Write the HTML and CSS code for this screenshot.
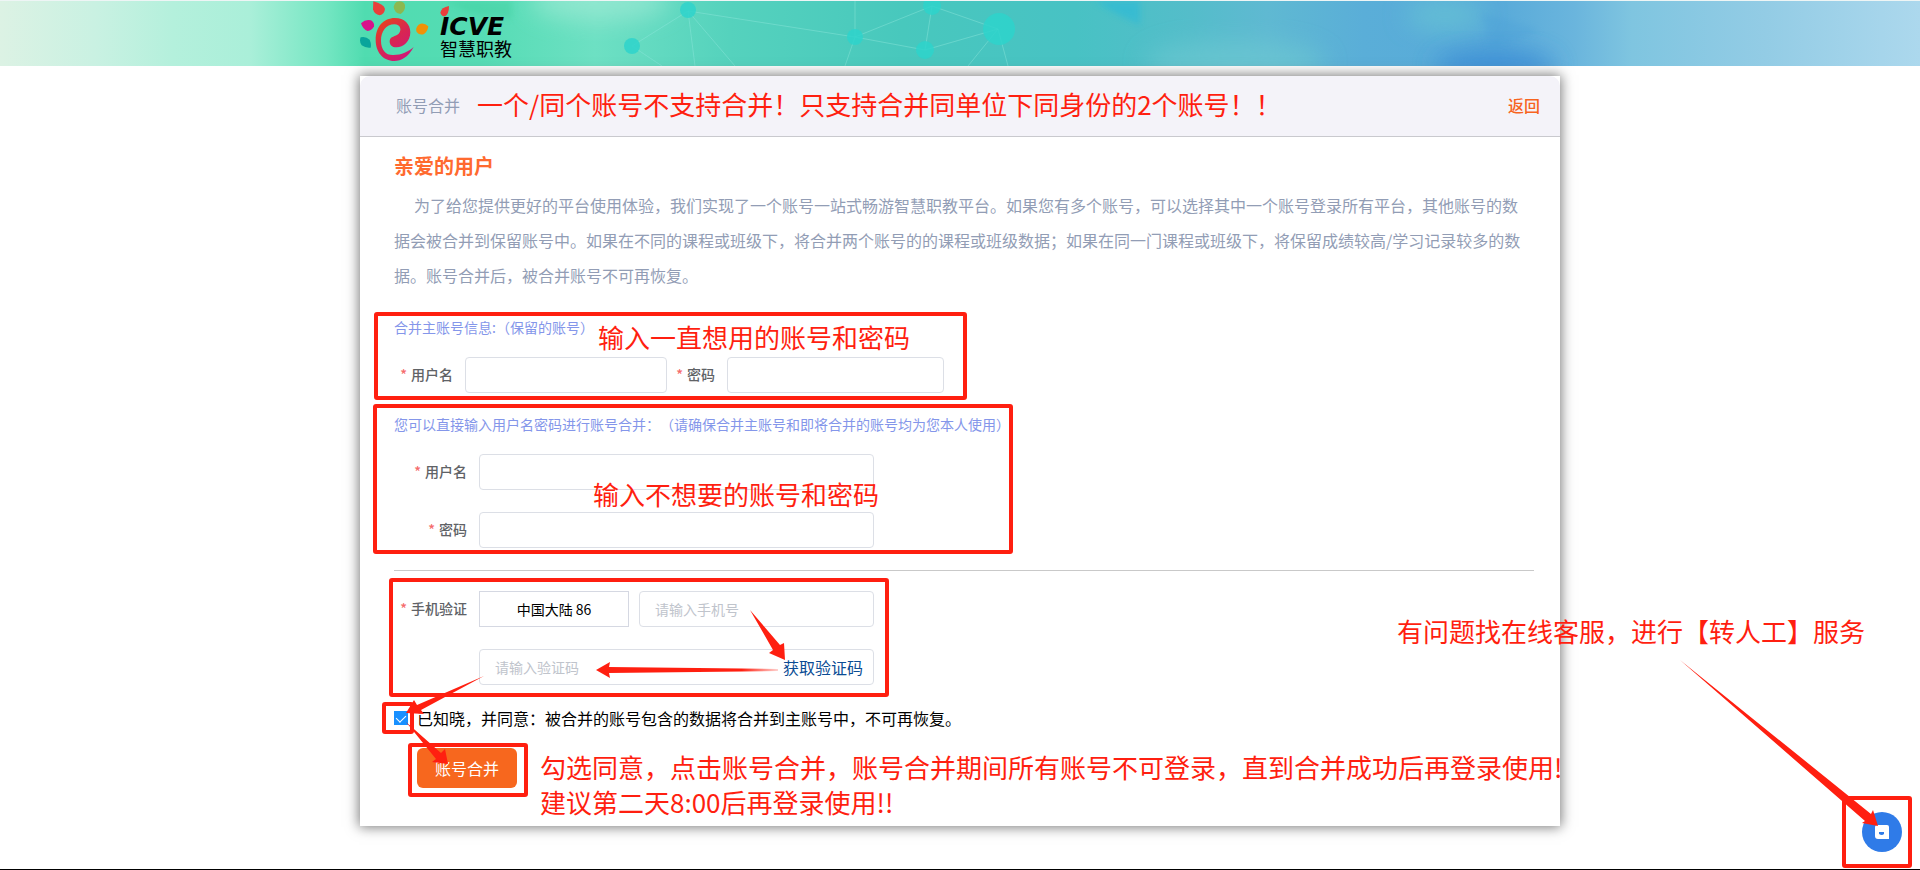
FILE: index.html
```
<!DOCTYPE html>
<html lang="zh-CN">
<head>
<meta charset="utf-8">
<meta name="viewport" content="width=device-width, initial-scale=1">
<title>账号合并</title>
<link rel="stylesheet" href="styles.css">
</head>
<body>
<div class="page">
  <header class="banner">
    <svg class="banner-art" viewBox="0 0 1920 65" preserveAspectRatio="xMidYMid slice" aria-hidden="true">
      <defs>
        <filter id="soft" x="-50%" y="-50%" width="200%" height="200%"><feGaussianBlur stdDeviation="12"/></filter>
        <filter id="haze" x="-50%" y="-50%" width="200%" height="200%"><feGaussianBlur stdDeviation="3"/></filter>
      </defs>
      <ellipse cx="600" cy="0" rx="70" ry="20" fill="#a8ecd8" opacity=".6" filter="url(#soft)"/>
      <path d="M445 0H512V18L470 12Z" fill="#3ccf9c" opacity=".4" filter="url(#haze)"/>
      <path d="M1095 0H1140V24L1115 12Z" fill="#24b8dc" opacity=".5" filter="url(#haze)"/>
      <ellipse cx="1235" cy="62" rx="90" ry="22" fill="#70cad2" opacity=".6" filter="url(#soft)"/>
      <ellipse cx="1445" cy="14" rx="40" ry="16" fill="#68c4d4" opacity=".7" filter="url(#soft)"/>
      <ellipse cx="1495" cy="66" rx="60" ry="18" fill="#3a8cd6" opacity=".8" filter="url(#soft)"/>
      <path d="M1482 12 1540 29 1490 50Z" fill="#4a9fd8" opacity=".3" filter="url(#haze)"/>
      <g stroke="#8ee6dc" stroke-opacity=".45" fill="none">
        <path d="M632 45 688 10 855 36 932 5 998 28 925 49 855 36M632 45 662 65M688 10 695 65M688 10 735 65M855 36 845 65M932 5 925 49M998 28 968 65M998 28 1008 65M855 0V36"/>
      </g>
      <g fill="#2ed3cb" fill-opacity=".85"><circle cx="688" cy="9" r="8"/><circle cx="632" cy="45" r="8"/><circle cx="855" cy="36" r="8"/><circle cx="932" cy="5" r="9"/><circle cx="925" cy="49" r="9"/><circle cx="999" cy="28" r="16"/></g>
    </svg>
    <div class="brand">
      <svg class="brand-mark" viewBox="60 0 270 195" aria-hidden="true">
        <defs><linearGradient id="swirl" x1="0" y1="0" x2=".7" y2="1"><stop offset="0" stop-color="#ea4a12"/><stop offset=".55" stop-color="#d82552"/><stop offset="1" stop-color="#cf1878"/></linearGradient></defs>
        <path fill="url(#swirl)" d="M221 141C205 172 183 183 163 183C128 183 107 155 107 120C107 80 130 54 165 54C193 54 211 72 211 97C211 125 190 142 170 142C155 142 148 133 149 122C151 108 166 110 176 101C186 91 182 73 163 73C138 73 123 95 123 122C123 150 138 166 160 165C185 165 205 155 221 141Z"/>
        <path fill="#e93f3b" d="M100 4Q130 12 135 26Q134 42 119 46Q103 43 99 28Z"/>
        <path fill="#8cb850" d="M170 5Q190 1 195 15Q197 32 182 42Q162 38 161 20Q163 9 170 5Z"/>
        <path fill="#d9118b" d="M63 70Q77 56 93 61Q104 68 102 79Q96 92 83 93Q69 89 63 70Z"/>
        <path fill="#f09207" d="M265 79Q250 65 236 74Q225 84 230 96Q239 107 252 102Q263 94 265 79Z"/>
        <path fill="#09a59b" d="M62 112Q77 108 89 119Q95 133 92 143Q77 145 65 136Q57 124 62 112Z"/>
        <path fill="#e93f3b" d="M327 18Q304 22 301 38Q304 49 315 49Q327 42 327 18Z"/>
      </svg>
      <div class="brand-text"><span class="brand-en">ICVE</span><span class="brand-cn">智慧职教</span></div>
    </div>
  </header>

  <main class="card">
    <div class="card-head">
      <h1 class="card-title">账号合并</h1>
      <a class="back" href="#">返回</a>
    </div>
    <form class="card-body">
      <h2 class="greeting">亲爱的用户</h2>
      <p class="intro">为了给您提供更好的平台使用体验，我们实现了一个账号一站式畅游智慧职教平台。如果您有多个账号，可以选择其中一个账号登录所有平台，其他账号的数据会被合并到保留账号中。如果在不同的课程或班级下，将合并两个账号的的课程或班级数据；如果在同一门课程或班级下，将保留成绩较高/学习记录较多的数据。账号合并后，被合并账号不可再恢复。</p>

      <p class="hint hint-main">合并主账号信息:（保留的账号）</p>
      <div class="inline-row">
        <label class="label label-name" for="main-user">用户名</label>
        <input class="input input-name" id="main-user" type="text">
        <label class="label label-pass" for="main-pass">密码</label>
        <input class="input input-pass" id="main-pass" type="password">
      </div>

      <p class="hint hint-merge">您可以直接输入用户名密码进行账号合并：（请确保合并主账号和即将合并的账号均为您本人使用）</p>
      <div class="fields">
        <label class="label" for="merge-user">用户名</label>
        <input class="input" id="merge-user" type="text">
        <label class="label" for="merge-pass">密码</label>
        <input class="input" id="merge-pass" type="password">
      </div>

      <hr class="divider">

      <div class="fields">
        <label class="label" for="phone">手机验证</label>
        <div class="phone-row">
          <select class="region" aria-label="国家或地区"><option>中国大陆 86</option></select>
          <input class="input" id="phone" type="tel" placeholder="请输入手机号">
        </div>
        <div class="code-row">
          <input class="code-input" type="text" placeholder="请输入验证码" aria-label="验证码">
          <button class="code-button" type="button">获取验证码</button>
        </div>
      </div>

      <div class="agree">
        <input class="check" id="agree" type="checkbox" checked>
        <label for="agree">已知晓，并同意：被合并的账号包含的数据将合并到主账号中，不可再恢复。</label>
      </div>
      <button class="submit" type="button">账号合并</button>
    </form>

    <div class="notes">
      <p class="note note-title">一个/同个账号不支持合并！只支持合并同单位下同身份的2个账号！！</p>
      <p class="note note-keep">输入一直想用的账号和密码</p>
      <p class="note note-drop">输入不想要的账号和密码</p>
      <p class="note note-submit">勾选同意，点击账号合并，账号合并期间所有账号不可登录，直到合并成功后再登录使用!!<br>建议第二天8:00后再登录使用!!</p>
      <span class="frame frame-keep"></span>
      <span class="frame frame-drop"></span>
      <span class="frame frame-phone"></span>
      <span class="frame frame-check"></span>
      <span class="frame frame-submit"></span>
      <svg class="arrows" width="1200" height="750" viewBox="0 0 1200 750" aria-hidden="true">
        <defs><linearGradient id="fade" x1="1" x2="0"><stop offset="0" stop-color="#ff1f10" stop-opacity=".2"/><stop offset=".2" stop-color="#ff1f10"/></linearGradient></defs>
        <path d="M390 534 420 569 424 567 425 584 409 577 413 574Z"/>
        <path fill="url(#fade)" d="M418 593V595L249 597 250 602 236 594 250 586 249 591Z"/>
        <path d="M124 600 57 629 54 624 46 637 64 638 61 634Z"/>
        <path d="M46 646 81 677 85 673 88 688 72 686 76 683Z"/>
      </svg>
    </div>
  </main>

  <aside class="support">
    <p class="note note-support">有问题找在线客服，进行【转人工】服务</p>
    <button class="chat" type="button" aria-label="在线客服">
      <svg viewBox="0 0 40 40" aria-hidden="true"><path fill="#fff" d="M15 13H25Q27 13 27 15V27H16Q13 27 13 24V15Q13 13 15 13Z"/><path fill="#2f7be8" d="M17 20H22V22Q20 24 17 22Z"/></svg>
    </button>
    <span class="frame frame-chat"></span>
    <svg class="support-arrow" width="240" height="190" viewBox="0 0 240 190" aria-hidden="true"><path d="M10 10 201 164 203 160 208 176 192 173 195 171Z"/></svg>
  </aside>
</div>
</body>
</html>
```
FILE: styles.css
```
* { box-sizing: border-box; }

body {
  margin: 0;
  background: #fff;
  color: #000;
  font-family: "Noto Sans CJK SC", sans-serif;
  font-size: 16px;
  text-spacing-trim: space-all;
}

h1, h2, p { margin: 0; }

input, button, select { font-family: inherit; }

.page {
  position: relative;
  min-height: 100vh;
  overflow: hidden;
  border-bottom: 1px solid #000;
}

/* Banner */
.banner {
  position: relative;
  height: 66px;
  border-top: 1px solid #eef5f5;
  background: linear-gradient(90deg, #dcf2e4 0, #c9f1e2 5%, #b4f0dc 9%, #aaefd9 13%, #74e6c2 17%, #50dcb0 19%, #55dcb4 25%, #6de0c3 31%, #55d2bd 38%, #48c8bd 47%, #48c2c4 56%, #54bdca 62%, #5fb9d2 66%, #5aaed8 71%, #58aad9 78%, #6ab5dd 82%, #7fc5e0 85%, #93cce5 92%, #acd8ed 100%);
}

.banner-art {
  position: absolute;
  inset: 0;
  width: 100%;
  height: 100%;
}

.brand {
  position: relative;
  display: flex;
  max-width: 1200px;
  margin: 0 auto;
}

.brand-mark { width: 90px; height: 65px; flex: none; margin-top: -1px; }

.brand-text {
  display: flex;
  flex-direction: column;
  margin-left: -10px;
  padding-top: 16px;
}

.brand-en {
  font: italic 700 25px/20px "DejaVu Sans", sans-serif;
}

.brand-cn { font-size: 18px; line-height: 22px; }

/* Card */
.card {
  position: relative;
  max-width: 1200px;
  margin: 10px auto 0;
  background: #fff;
  box-shadow: 0 0 12px 1px #777;
}

.card-head {
  display: flex;
  align-items: center;
  justify-content: space-between;
  height: 61px;
  padding: 0 20px 3px 36px;
  border-bottom: 1px solid #c9c9ce;
  border-radius: 10px 10px 0 0;
  background: #f4f3f9;
}

.card-title { color: #929db5; font-size: 16px; font-weight: 400; }

.back { color: #f7641f; font-weight: 500; text-decoration: none; }

.card-body { padding: 14px 26px 38px 34px; }

.greeting {
  color: #ff6a2f;
  font-size: 20px;
  font-weight: 700;
  line-height: 30px;
}

.intro {
  margin-top: 7px;
  padding-right: 9px;
  color: #929db5;
  line-height: 35px;
  text-indent: 20px;
}

.hint {
  padding-bottom: 1px;
  color: #8496ea;
  font-size: 14px;
  line-height: 20px;
}

.hint-main { margin-top: 24px; }
.hint-merge { margin-top: 21px; }

.inline-row { display: flex; margin-top: 19px; }

.label {
  flex: none;
  padding-right: 12px;
  color: #606266;
  font-size: 14px;
  font-weight: 500;
  line-height: 34px;
  text-align: right;
}

.label::before { content: "*"; margin-right: 4px; color: #f56c6c; }

.label-name { width: 71px; }
.label-pass { width: 60px; }

.input, .code-row {
  width: 100%;
  min-width: 0;
  height: 36px;
  padding: 0 15px;
  border: 1px solid #dcdfe6;
  border-radius: 4px;
  background: #fff;
  font-size: 14px;
}

.input-name { width: 202px; }
.input-pass { width: 217px; }

::placeholder { color: #c0c4cc; opacity: 1; }

.fields {
  display: grid;
  grid-template-columns: 85px minmax(0, 395px);
  row-gap: 22px;
  margin-top: 19px;
}

.divider {
  height: 1px;
  margin: 22px 0 20px;
  border: 0;
  background: #c9c9c9;
}

.phone-row { display: flex; gap: 10px; }

.region {
  flex: none;
  width: 150px;
  height: 36px;
  border: 1px solid #d5d8e2;
  border-radius: 0;
  background: #fff;
  color: #000;
  font-size: 14px;
  text-align-last: center;
  appearance: none;
}

.code-row {
  display: flex;
  grid-column: 2;
  align-items: center;
  padding-right: 10px;
}

.code-input {
  flex: 1;
  min-width: 0;
  padding: 0;
  border: 0;
  background: none;
  font-size: 14px;
}

.code-button {
  padding: 0;
  border: 0;
  background: none;
  color: #0b4c94;
  font-size: 16px;
}

.agree {
  display: flex;
  align-items: center;
  gap: 9px;
  margin-top: 23px;
  line-height: 20px;
}

.check {
  width: 14px;
  height: 14px;
  margin: 0;
  appearance: none;
  background: #1890ff;
}

.check:checked::before {
  content: "";
  display: block;
  width: 5px;
  height: 8px;
  margin: 2px 0 0 4px;
  border: solid #fff;
  border-width: 0 1px 1px 0;
  transform: rotate(45deg);
}

.submit {
  display: block;
  width: 100px;
  height: 40px;
  margin: 20px 0 0 23px;
  border: 0;
  border-radius: 6px;
  background: #f7671e;
  color: #fff;
  font-size: 16px;
}

/* Red guidance notes laid over the page */
.notes, .support { pointer-events: none; }

.notes {
  position: absolute;
  inset: 0;
  overflow: hidden;
}

.note {
  position: absolute;
  color: #ff1f10;
  font-size: 26px;
  line-height: 35px;
  white-space: nowrap;
}

.note-title { left: 117px; top: 10px; }
.note-keep { left: 238px; top: 243px; }
.note-drop { left: 233px; top: 400px; }
.note-submit { left: 180px; top: 673px; }

.frame {
  position: absolute;
  border: 4px solid #ff1f10;
  border-radius: 3px;
}

.frame-keep { left: 14px; top: 236px; width: 593px; height: 88px; }
.frame-drop { left: 13px; top: 328px; width: 640px; height: 150px; }
.frame-phone { left: 29px; top: 502px; width: 500px; height: 119px; }
.frame-check { left: 22px; top: 626px; width: 32px; height: 32px; }
.frame-submit { left: 48px; top: 667px; width: 120px; height: 54px; }

.arrows, .support-arrow { position: absolute; fill: #ff1f10; }
.arrows { left: 0; top: 0; }

.support {
  position: absolute;
  right: 0;
  bottom: 0;
  width: 523px;
  height: 256px;
}

.note-support { left: 0; top: 0; }

.chat {
  position: absolute;
  right: 18px;
  bottom: 17px;
  width: 40px;
  height: 40px;
  padding: 0;
  border: 0;
  border-radius: 50%;
  background: #2f7be8;
  pointer-events: auto;
}

.chat svg { display: block; }

.frame-chat { right: 8px; bottom: 1px; width: 70px; height: 72px; }
.support-arrow { right: 10px; bottom: 29px; }
```
